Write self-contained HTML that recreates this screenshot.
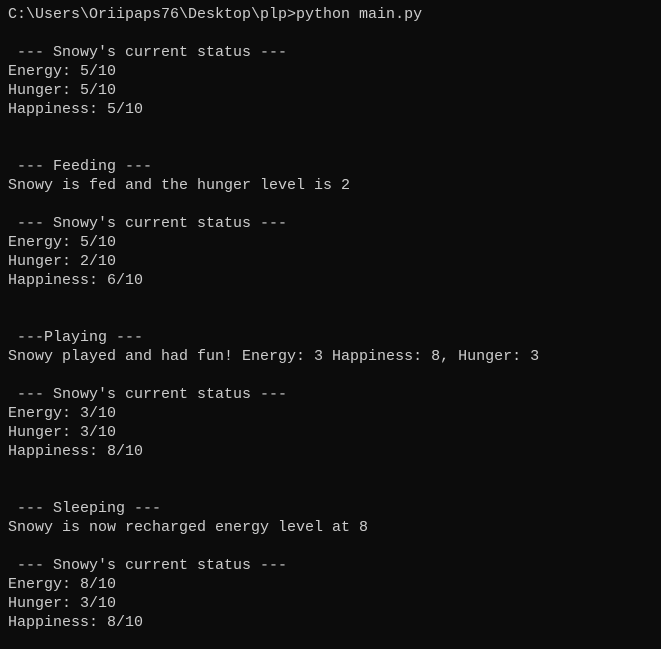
<!DOCTYPE html>
<html><head><meta charset="utf-8"><style>
html,body{margin:0;padding:0;background:#0c0c0c;width:661px;height:649px;overflow:hidden}
pre{margin:0;padding:5px 0 0 8px;font-family:"Liberation Mono",monospace;font-size:15px;line-height:19px;color:#cccccc}
</style></head><body><pre>C:\Users\Oriipaps76\Desktop\plp>python main.py

 --- Snowy's current status ---
Energy: 5/10
Hunger: 5/10
Happiness: 5/10


 --- Feeding ---
Snowy is fed and the hunger level is 2

 --- Snowy's current status ---
Energy: 5/10
Hunger: 2/10
Happiness: 6/10


 ---Playing ---
Snowy played and had fun! Energy: 3 Happiness: 8, Hunger: 3

 --- Snowy's current status ---
Energy: 3/10
Hunger: 3/10
Happiness: 8/10


 --- Sleeping ---
Snowy is now recharged energy level at 8

 --- Snowy's current status ---
Energy: 8/10
Hunger: 3/10
Happiness: 8/10</pre></body></html>
